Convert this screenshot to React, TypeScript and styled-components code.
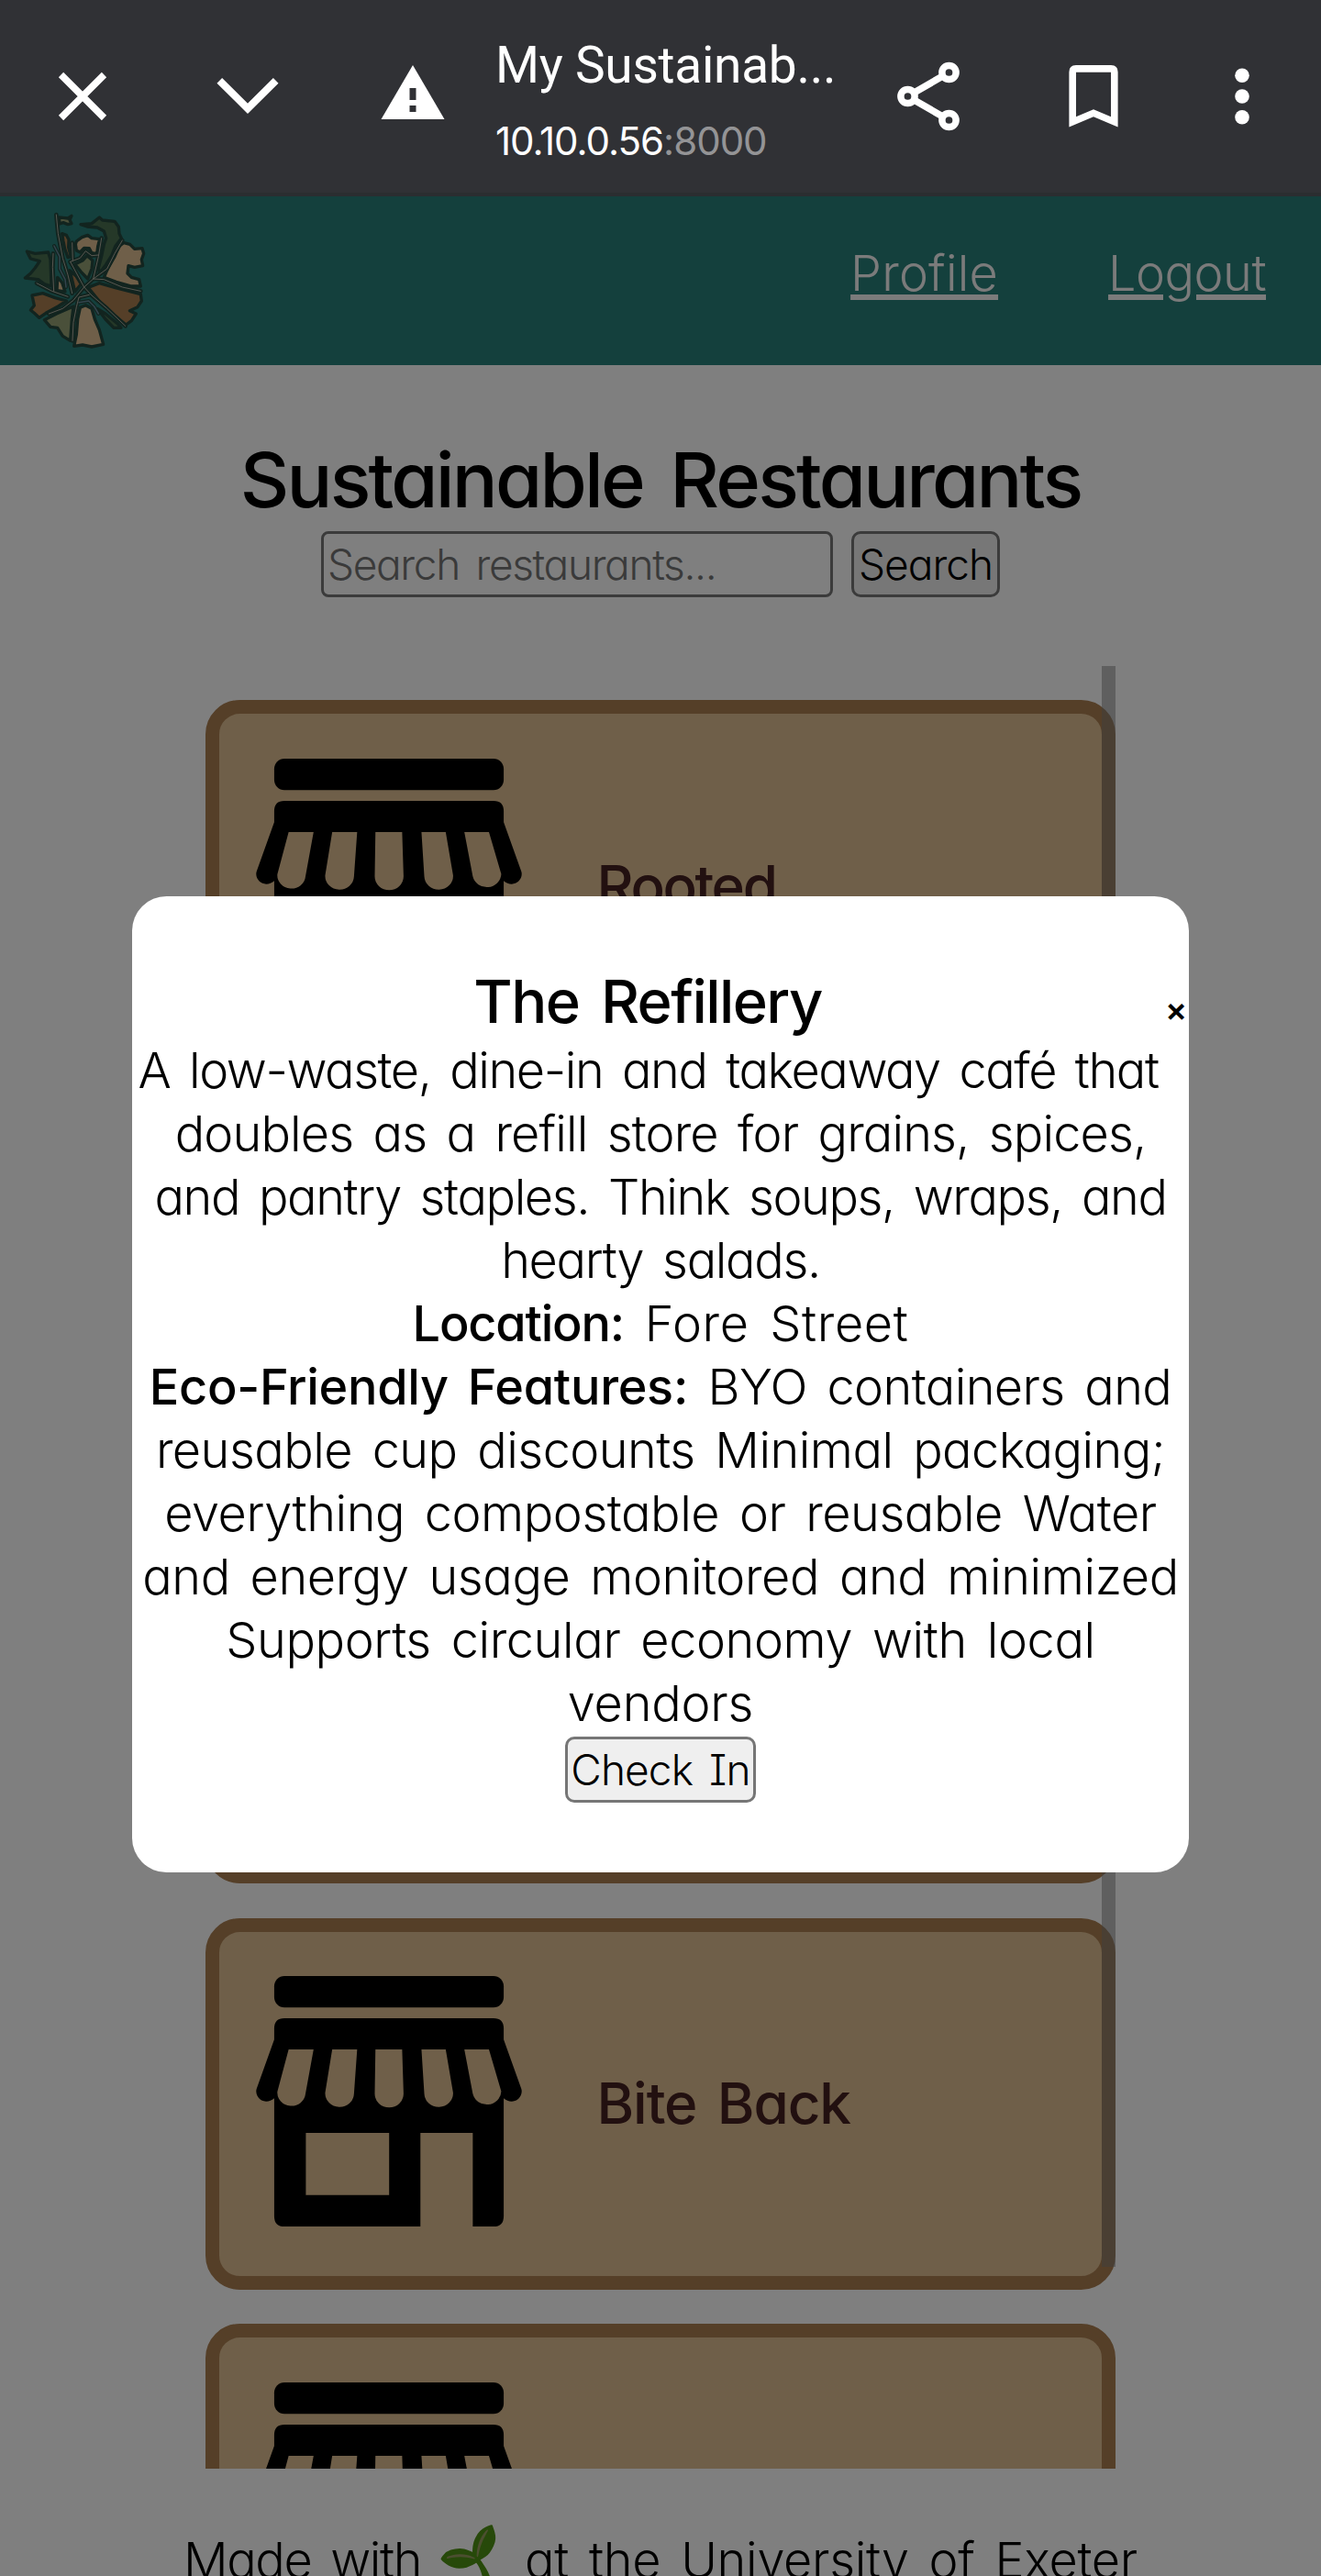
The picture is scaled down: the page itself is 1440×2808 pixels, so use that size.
import React from 'react';
import styled, { createGlobalStyle } from 'styled-components';

const GlobalStyle = createGlobalStyle`
  * { box-sizing: border-box; }
  body { margin: 0; background: #fff; }
  h1, h2, p { margin: 0; }
`;

const handFont = `
  font-family: "Inter", "Open Sans", sans-serif;
  font-feature-settings: "cv11", "cv08", "calt" 0;
`;

const Screen = styled.div`
  ${handFont}
  display: flex;
  flex-direction: column;
  width: 1440px;
  height: 2808px;
  overflow: hidden;
  color: #000;
  font-size: 54px;
  font-weight: 300;
`;

/* Browser toolbar */

const Toolbar = styled.header`
  display: flex;
  align-items: center;
  flex: none;
  height: 214px;
  background: #303135;
  border-bottom: 4px solid #2b2d30;
  color: #fff;
`;

const ToolButton = styled.button<{ $width?: number }>`
  display: flex;
  align-items: center;
  justify-content: center;
  width: ${(p) => p.$width ?? 180}px;
  height: 180px;
  padding: 0;
  border: 0;
  background: none;
  color: #fff;
`;

const PageInfo = styled.div`
  display: flex;
  flex-direction: column;
  align-self: flex-start;
  gap: 26px;
  width: 382px;
  padding-top: 39px;
  white-space: nowrap;
`;

const PageTitle = styled.span`
  font: 400 55px/64px Roboto, sans-serif;
  letter-spacing: -0.25px;
`;

const PageUrl = styled.span`
  font-size: 42px;
  font-weight: 400;
  line-height: 50px;
  letter-spacing: -1px;
`;

const Port = styled.span`
  color: #949496;
`;

/* Site */

const Site = styled.div`
  position: relative;
  display: flex;
  flex-direction: column;
  flex: 1;
  min-height: 0;
`;

const SiteHeader = styled.div`
  display: flex;
  align-items: flex-start;
  justify-content: space-between;
  flex: none;
  height: 184px;
  padding: 14px 60px 0 25px;
  background: #28807a;
`;

const Nav = styled.nav`
  display: flex;
  gap: 120px;
  padding-top: 34.5px;
`;

const NavLink = styled.a<{ $tracking: number }>`
  color: #f6f6f6;
  line-height: 69px;
  letter-spacing: ${(p) => p.$tracking}px;
  text-decoration: underline;
  text-decoration-thickness: 6px;
  text-underline-offset: 4px;
`;

const Main = styled.main`
  display: flex;
  flex-direction: column;
  align-items: center;
`;

const Heading = styled.h1`
  margin-top: 77px;
  font-size: 83px;
  font-weight: 500;
  line-height: 96px;
  letter-spacing: -2.8px;
  word-spacing: 10px;
  white-space: nowrap;
`;

const SearchForm = styled.div`
  display: flex;
  gap: 20px;
  margin-top: 8px;
`;

const SearchInput = styled.input`
  ${handFont}
  width: 558px;
  height: 72px;
  padding: 0 4px;
  border: 3px solid #767676;
  border-radius: 8px;
  background: #fff;
  font-size: 46px;
  font-weight: 300;
  letter-spacing: -1.35px;
  word-spacing: 6px;
  &::placeholder { color: #757575; opacity: 1; }
`;

const Button = styled.button<{ $width: number; $tracking: number }>`
  ${handFont}
  display: flex;
  align-items: center;
  justify-content: center;
  width: ${(p) => p.$width}px;
  height: 72px;
  padding: 0;
  border: 3px solid #767676;
  border-radius: 10px;
  background: #efefef;
  color: #000;
  font-size: 46px;
  font-weight: 300;
  letter-spacing: ${(p) => p.$tracking}px;
  word-spacing: 6px;
  white-space: nowrap;
`;

const ListFrame = styled.div`
  position: relative;
  width: 992px;
  height: 1965px;
  margin-top: 75px;
  overflow: hidden;
`;

const CardList = styled.div`
  display: flex;
  flex-direction: column;
  gap: 37.5px;
  padding-top: 37px;
`;

const ScrollThumb = styled.div`
  position: absolute;
  top: 0;
  right: 0;
  width: 15px;
  height: 1745px;
  background: rgba(125, 125, 125, 0.5);
`;

const Card = styled.article`
  display: flex;
  align-items: center;
  flex: none;
  gap: 82px;
  height: 405px;
  padding-left: 39.5px;
  border: 15px solid #aa7e50;
  border-radius: 37.5px;
  background: #debe92;
`;

const CardName = styled.h2<{ $tracking: number }>`
  color: #442020;
  font-size: 62px;
  font-weight: 500;
  line-height: 72px;
  letter-spacing: ${(p) => p.$tracking}px;
  word-spacing: 7px;
`;

const Footer = styled.footer`
  display: flex;
  align-items: center;
  justify-content: center;
  flex: none;
  margin-top: 65px;
  line-height: 69px;
  white-space: nowrap;
  word-spacing: 7px;
`;

const FooterText = styled.span<{ $tracking: number }>`
  letter-spacing: ${(p) => p.$tracking}px;
`;

const Sprout = styled.span`
  margin: 0 18px 0 20px;
  font-size: 60px;
  transform: rotate(-20deg);
  filter: hue-rotate(12deg) saturate(1.35) brightness(0.7);
`;

/* Modal */

const Backdrop = styled.div`
  position: absolute;
  inset: 0;
  display: flex;
  align-items: center;
  justify-content: center;
  padding-bottom: 4px;
  background: rgba(0, 0, 0, 0.5);
`;

const Modal = styled.section`
  display: flex;
  flex-direction: column;
  align-items: center;
  width: 1152px;
  height: 1064px;
  padding-top: 74px;
  border-radius: 37.5px;
  background: #fff;
`;

const ModalHead = styled.div`
  display: flex;
  align-items: center;
  align-self: stretch;
  height: 81px;
`;

const ModalTitle = styled.h2`
  flex: 1;
  font-size: 65px;
  font-weight: 500;
  line-height: 79px;
  letter-spacing: -1.6px;
  word-spacing: 8px;
  text-align: center;
`;

const Close = styled.span`
  width: 28px;
  padding-top: 17px;
  font-size: 36px;
  font-weight: 600;
  line-height: 40px;
  text-align: center;
`;

const Line = styled.p<{ $tracking: number; $trail?: number }>`
  height: 69px;
  padding-right: ${(p) => p.$trail ?? 0}px;
  line-height: 69px;
  letter-spacing: ${(p) => p.$tracking}px;
  word-spacing: 7px;
  white-space: nowrap;
`;

const Strong = styled.strong<{ $tracking: number }>`
  font-weight: 500;
  letter-spacing: ${(p) => p.$tracking}px;
`;

const ButtonRow = styled.div`
  padding-top: 2px;
`;

/* Drawings */

const Icon = ({ children }: { children: React.ReactNode }) => (
  <svg width="80" height="80" viewBox="0 0 80 80" fill="none" stroke="none">{children}</svg>
);

const CloseIcon = () => (
  <Icon><path d="M16.5 16.5 63.5 63.5M63.5 16.5 16.5 63.5" stroke="currentColor" strokeWidth="7.5" /></Icon>
);
const ChevronIcon = () => (
  <Icon><path d="M9.3 22.8 40 53.4 70.7 22.8" stroke="currentColor" strokeWidth="8" /></Icon>
);
const WarningIcon = () => (
  <Icon>
    <path d="M40 6 74.5 65H5.5Z" fill="currentColor" />
    <path d="M36.5 31h7v13h-7zM36.5 50h7v7h-7z" fill="#303135" />
  </Icon>
);
const ShareIcon = () => (
  <Icon>
    <g stroke="currentColor" strokeWidth="7.5">
      <circle cx="17.5" cy="40" r="7.6" />
      <circle cx="62.5" cy="14" r="7.6" />
      <circle cx="62.5" cy="66" r="7.6" />
      <path d="M24 36.2 56 17.8M24 43.8 56 62.2" />
    </g>
  </Icon>
);
const BookmarkIcon = () => (
  <Icon>
    <path
      fill="currentColor"
      fillRule="evenodd"
      d="M13.4 73.5V13.5Q13.4 6 20.9 6H59.1Q66.6 6 66.6 13.5V73.5L40 62.2ZM21 13.7V62.3L40 54.2 59 62.3V13.7Z"
    />
  </Icon>
);
const MoreIcon = () => (
  <Icon>
    <g fill="currentColor">
      <circle cx="40" cy="17.3" r="7.8" />
      <circle cx="40" cy="40" r="7.8" />
      <circle cx="40" cy="62.7" r="7.8" />
    </g>
  </Icon>
);

const StoreIcon = () => (
  <svg width="290" height="278" viewBox="206 252 757 834" preserveAspectRatio="none" fill="#000">
    <rect x="258" y="252" width="653" height="103" rx="29" ry="34" />
    <path
      fillRule="evenodd"
      d="M258 424Q258 390 287 390H882Q911 390 911 424V460L961 620C967 642 951 662 934 662C925 662 918 659 911 652V1037Q911 1071 882 1071H823V765H674V1071H287Q258 1071 258 1037V652C251 659 244 662 235 662C218 662 202 642 208 620L258 460Z
      M299 492H370L347 637A40 43 0 0 1 267 630Z
      M423 492H494L485 637A41 45 0 0 1 403 634Z
      M546 492H622L626 637A41 45 0 0 1 544 637Z
      M677 492H746L767 634A41 45 0 0 1 685 637Z
      M799 492H869L904 629A41 45 0 0 1 823 637Z
      M348 765V968H585V765Z"
    />
  </svg>
);

const tan = '#debe92';
const brown = '#aa7e50';
const sage = '#94a074';
const green = '#4a7050';

const plots: [string, string][] = [
  [sage, '193,97 207,98 222,100 234,92 228,105 234,117 222,120 207,114 195,118'],
  [brown, '203,150 217,155 225,170 224,195 232,225 222,228 212,200 207,175'],
  [tan, '250,175 268,162 287,155 300,165 326,168 320,192 317,216 300,213 292,198 275,197 262,211 250,205 247,185'],
  [green, '264,120 300,117 325,97 335,106 375,110 388,128 390,150 397,165 378,190 365,222 346,252 325,280 322,262 333,220 340,185 347,165 340,142 318,130 285,127'],
  [tan, '405,180 425,185 440,200 465,198 470,215 463,235 467,255 440,260 420,255 417,280 430,293 455,300 460,322 430,322 380,308 340,293 352,265 375,225 390,190'],
  [sage, '245,250 270,238 285,222 303,238 300,265 287,298 265,275'],
  [green, '88,208 115,215 158,211 165,235 168,322 145,315 125,300 82,295 100,280 115,262 130,240 100,232'],
  [tan, '188,293 203,310 213,340 186,336'],
  [brown, '228,270 250,290 265,315 245,340 238,310'],
  [brown, '105,352 140,345 180,360 218,370 190,388 150,410 128,425 112,410 100,400 112,385'],
  [sage, '240,388 235,430 230,500 205,485 188,458 165,455 145,432 185,412'],
  [tan, '262,392 280,384 300,395 310,430 325,465 338,512 300,520 270,514 242,518 250,480 254,430'],
  [brown, '288,326 325,312 380,328 460,348 463,370 450,390 424,402 445,412 430,435 412,448 375,418 330,378'],
  [green, '318,395 345,412 385,445 396,458 372,458 345,430'],
];

const roads = [
  '184,88 190,150 205,230 222,285 236,345',
  '120,312 170,338 222,356',
  '230,242 275,325',
  '230,242 262,230 280,207 300,222 322,220',
  '332,165 322,225 305,298',
  '400,172 375,215 350,265 305,298 275,325 240,368 205,395 160,412',
  '305,298 340,300 400,325 460,338',
  '275,325 300,352 350,395 410,452',
  '292,350 258,358 250,390 240,440 237,500',
  '174,215 172,260 176,338',
  '236,180 238,238',
];

const streams = ['177,190 195,225 195,265 213,300 216,325', '258,375 290,370 308,388 322,412'];

const Logo = () => (
  <svg width="135" height="154" viewBox="75 70 405 462" fill="none" strokeLinejoin="round" strokeLinecap="round">
    {plots.map(([fill, points], i) => (
      <polygon key={i} points={points} fill={fill} stroke="#24483e" strokeWidth="10" />
    ))}
    {roads.map((points) => (
      <polyline key={points} points={points} stroke="#24483e" strokeWidth="14" />
    ))}
    {streams.map((points) => (
      <polyline key={points} points={points} stroke="#24483e" strokeWidth="12" />
    ))}
    {streams.map((points) => (
      <polyline key={points + 'w'} points={points} stroke="#64889a" strokeWidth="4.5" />
    ))}
    {roads.map((points) => (
      <polyline key={points + 'r'} points={points} stroke="#b9b5a8" strokeWidth="2.8" />
    ))}
  </svg>
);

const restaurants = [
  { name: 'Rooted', tracking: -2.4 },
  { name: '', tracking: 0 },
  { name: '', tracking: 0 },
  { name: 'Bite Back', tracking: -1.1 },
  { name: '', tracking: 0 },
];

export default function App() {
  return (
    <Screen>
      <GlobalStyle />
      <Toolbar>
        <ToolButton><CloseIcon /></ToolButton>
        <ToolButton><ChevronIcon /></ToolButton>
        <ToolButton><WarningIcon /></ToolButton>
        <PageInfo>
          <PageTitle>My Sustainab...</PageTitle>
          <PageUrl>10.10.0.56<Port>:8000</Port></PageUrl>
        </PageInfo>
        <ToolButton><ShareIcon /></ToolButton>
        <ToolButton><BookmarkIcon /></ToolButton>
        <ToolButton $width={144}><MoreIcon /></ToolButton>
      </Toolbar>
      <Site>
        <SiteHeader>
          <Logo />
          <Nav>
            <NavLink $tracking={0.2}>Profile</NavLink>
            <NavLink $tracking={-0.5}>Logout</NavLink>
          </Nav>
        </SiteHeader>
        <Main>
          <Heading>Sustainable Restaurants</Heading>
          <SearchForm>
            <SearchInput placeholder="Search restaurants..." />
            <Button $width={162} $tracking={-1}>Search</Button>
          </SearchForm>
          <ListFrame>
            <CardList>
              {restaurants.map((r, i) => (
                <Card key={i}>
                  <StoreIcon />
                  <CardName $tracking={r.tracking}>{r.name}</CardName>
                </Card>
              ))}
            </CardList>
            <ScrollThumb />
          </ListFrame>
        </Main>
        <Footer>
          <FooterText $tracking={-1.4}>Made with</FooterText>
          <Sprout>🌱</Sprout>
          <FooterText $tracking={-0.3}>at the University of Exeter</FooterText>
        </Footer>
        <Backdrop>
          <Modal>
            <ModalHead>
              <ModalTitle>The Refillery</ModalTitle>
              <Close>×</Close>
            </ModalHead>
            <Line $tracking={-1.43} $trail={27}>A low-waste, dine-in and takeaway café that</Line>
            <Line $tracking={-0.87}>doubles as a refill store for grains, spices,</Line>
            <Line $tracking={-1.38}>and pantry staples. Think soups, wraps, and</Line>
            <Line $tracking={-1.34}>hearty salads.</Line>
            <Line $tracking={0.6}><Strong $tracking={-1.2}>Location:</Strong> Fore Street</Line>
            <Line $tracking={-0.6}><Strong $tracking={-0.3}>Eco-Friendly Features:</Strong> BYO containers and</Line>
            <Line $tracking={-0.53}>reusable cup discounts Minimal packaging;</Line>
            <Line $tracking={-0.45}>everything compostable or reusable Water</Line>
            <Line $tracking={-0.4}>and energy usage monitored and minimized</Line>
            <Line $tracking={-0.38}>Supports circular economy with local</Line>
            <Line $tracking={-0.2}>vendors</Line>
            <ButtonRow>
              <Button $width={208} $tracking={-0.9}>Check In</Button>
            </ButtonRow>
          </Modal>
        </Backdrop>
      </Site>
    </Screen>
  );
}
